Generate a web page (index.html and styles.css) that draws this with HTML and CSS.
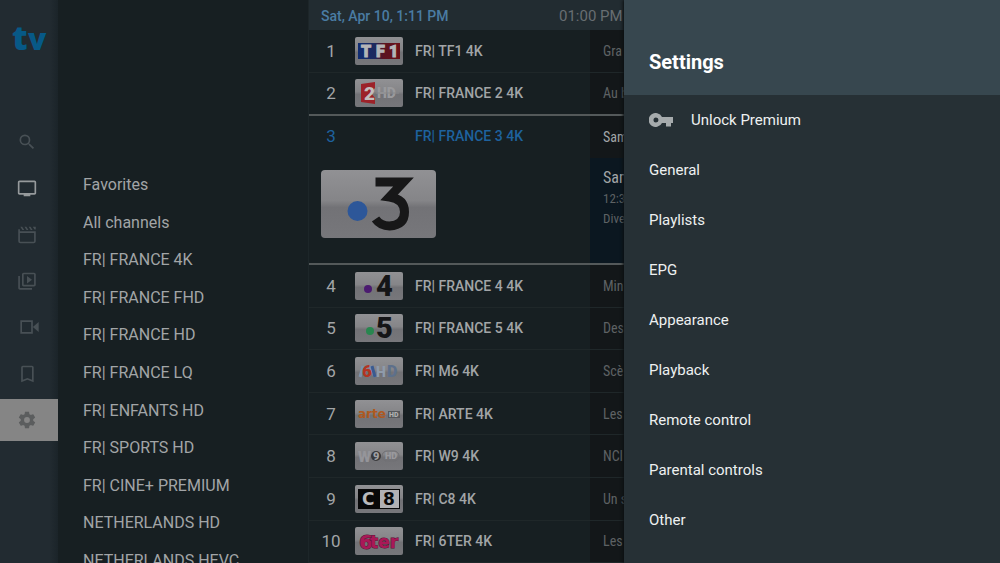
FILE: index.html
```
<!DOCTYPE html>
<html lang="en">
<head>
    <meta charset="UTF-8">
    <meta name="viewport" content="width=device-width, initial-scale=1.0">
    <title>TV - Settings</title>
    <link rel="stylesheet" href="styles.css">
</head>
<body>
    <nav class="sidebar" aria-label="Main">
        <svg class="brand" viewBox="0 0 36 32" role="img" aria-label="tv">
            <text class="brand-t" x="0" y="27">t</text>
            <text class="brand-v" x="16" y="27">v</text>
        </svg>
        <div class="menu">
            <button type="button" aria-label="Search"><svg viewBox="0 0 24 24"><path d="M15.5 14h-.79l-.28-.27A6.47 6.47 0 0 0 16 9.5 6.5 6.5 0 1 0 9.5 16c1.61 0 3.09-.59 4.23-1.57l.27.28v.79l5 4.99L20.49 19l-4.99-5zm-6 0a4.5 4.5 0 1 1 0-9 4.5 4.5 0 0 1 0 9z"/></svg></button>
            <button type="button" aria-label="TV" class="current"><svg viewBox="0 0 24 24"><path d="M21 3H3c-1.1 0-2 .9-2 2v13c0 1.1.9 2 2 2h5v2h8v-2h5c1.1 0 2-.9 2-2V5c0-1.1-.9-2-2-2zm0 15H3V5h18v13z"/></svg></button>
            <button type="button" aria-label="Movies"><svg viewBox="0 0 24 24"><path d="M2.500 8.500h19v11a1.500 1.500 0 0 1-1.500 1.500H4a1.500 1.500 0 0 1-1.500-1.500V5" fill="none" stroke="currentColor" stroke-width="2"/><path d="M4 2l2.500 4h2.200L6.200 2zM9 2l2.500 4h2.200L11.200 2zM14 2l2.500 4h2.200L16.200 2zM19 2l2 3.500h1.500V2z"/></svg></button>
            <button type="button" aria-label="Shows"><svg viewBox="0 0 24 24"><path d="M3.500 6H1.500v14.500c0 1.100.9 2 2 2H18v-2H3.500V6zM20.500 2H8c-1.100 0-2 .9-2 2v12.500c0 1.100.9 2 2 2h12.500c1.100 0 2-.9 2-2V4c0-1.100-.9-2-2-2zm0 14.500H8V4h12.500v12.500zM12 6v9l6-4.500z"/></svg></button>
            <button type="button" aria-label="Recordings"><svg viewBox="0 0 24 24"><path d="M4 4h15v16H4V4zm2 2v12h11V6H6z"/><path d="M19 12l7-6v12z"/></svg></button>
            <button type="button" aria-label="My list"><svg viewBox="0 0 24 24"><path d="M18 2H7c-1.100 0-2 .9-2 2v18l7.500-3 7.500 3V4c0-1.100-.9-2-2-2zm0 17l-5.500-2.200L7 19V4h11v15z"/></svg></button>
            <button type="button" aria-label="Settings" class="focused"><svg viewBox="0 0 24 24"><path d="M19.430 12.980c.04-.32.07-.64.07-.98s-.03-.66-.07-.98l2.110-1.650c.19-.15.24-.42.12-.64l-2-3.460c-.12-.22-.39-.3-.61-.22l-2.490 1c-.52-.4-1.080-.73-1.690-.98l-.38-2.650C14.460 2.180 14.250 2 14 2h-4c-.25 0-.46.18-.49.42l-.38 2.650c-.61.25-1.170.59-1.690.98l-2.490-1c-.23-.09-.49 0-.61.22l-2 3.460c-.13.22-.07.49.12.64l2.110 1.650c-.04.32-.07.65-.07.98s.03.66.07.98l-2.110 1.650c-.19.15-.24.42-.12.64l2 3.460c.12.22.39.3.61.22l2.490-1c.52.4 1.080.73 1.690.98l.38 2.650c.03.24.24.42.49.42h4c.25 0 .46-.18.49-.42l.38-2.650c.61-.25 1.170-.59 1.690-.98l2.490 1c.23.09.49 0 .61-.22l2-3.460c.12-.22.07-.49-.12-.64l-2.110-1.650zM12 15.500a3.500 3.500 0 1 1 0-7 3.500 3.500 0 0 1 0 7z"/></svg></button>
        </div>
    </nav>

    <nav class="groups" aria-label="Channel groups">
        <ul>
            <li><a href="#">Favorites</a></li>
            <li><a href="#">All channels</a></li>
            <li><a href="#">FR| FRANCE 4K</a></li>
            <li><a href="#">FR| FRANCE FHD</a></li>
            <li><a href="#">FR| FRANCE HD</a></li>
            <li><a href="#">FR| FRANCE LQ</a></li>
            <li><a href="#">FR| ENFANTS HD</a></li>
            <li><a href="#">FR| SPORTS HD</a></li>
            <li><a href="#">FR| CINE+ PREMIUM</a></li>
            <li><a href="#">NETHERLANDS HD</a></li>
            <li><a href="#">NETHERLANDS HEVC</a></li>
        </ul>
    </nav>

    <main class="guide">
        <header class="guide-header">
            <span class="now">Sat, Apr 10, 1:11 PM</span>
            <span class="slot">01:00 PM</span>
        </header>

        <div class="row">
            <div class="channel">
                <span class="number">1</span>
                <svg class="logo" viewBox="0 0 48 28">
                    <defs>
                        <linearGradient id="tf1"><stop offset="0" stop-color="#0f2c72"/><stop offset=".4" stop-color="#1d2a5e"/><stop offset=".6" stop-color="#5a1420"/><stop offset="1" stop-color="#6a1018"/></linearGradient>
                    </defs>
                    <rect x="3" y="6" width="42" height="16" fill="url(#tf1)"/>
                    <g class="heavy" font-size="16" fill="#b4b4b7" stroke="#b4b4b7"><text x="6" y="20">T</text><text x="21" y="20">F</text><text x="34" y="20">1</text></g>
                </svg>
                <span class="name">FR| TF1 4K</span>
            </div>
            <div class="programme">Gra</div>
        </div>
        <div class="row">
            <div class="channel">
                <span class="number">2</span>
                <svg class="logo" viewBox="0 0 48 28">
                    <path d="M6 5l14-2v6l-4 5 4 5v6L6 23z" fill="#9c2229"/>
                    <text class="heavy" x="9" y="21" font-size="19" fill="#c2bdbd">2</text>
                    <text class="heavy" x="22" y="19" font-size="14" fill="#9a9a9d">HD</text>
                    <path d="M21 14h23" stroke="#88888b"/>
                </svg>
                <span class="name">FR| FRANCE 2 4K</span>
            </div>
            <div class="programme">Au b</div>
        </div>

        <section class="row expanded">
            <div class="channel">
                <span class="number">3</span>
                <span class="name">FR| FRANCE 3 4K</span>
                <svg class="logo" viewBox="0 0 114 68">
                    <circle cx="36" cy="41" r="10" fill="#2d5799"/>
                    <path d="M54 12H82L68 27Q83 29 83 42Q83 55 68 56Q59 56 54 49" class="three"/>
                </svg>
            </div>
            <div class="programme">
                <p class="current-show">Sam</p>
                <div class="details">
                    <h2>Sam</h2>
                    <p>12:3</p>
                    <p>Dive</p>
                </div>
            </div>
        </section>

        <div class="row">
            <div class="channel">
                <span class="number">4</span>
                <svg class="logo" viewBox="0 0 48 28">
                    <circle cx="13" cy="17" r="4" fill="#4b1a70"/>
                    <text class="heavy" x="21" y="24" font-size="29" fill="#151517">4</text>
                </svg>
                <span class="name">FR| FRANCE 4 4K</span>
            </div>
            <div class="programme">Min</div>
        </div>
        <div class="row">
            <div class="channel">
                <span class="number">5</span>
                <svg class="logo" viewBox="0 0 48 28">
                    <circle cx="15" cy="17" r="4" fill="#28864f"/>
                    <text class="heavy" x="21" y="24" font-size="29" fill="#151517">5</text>
                </svg>
                <span class="name">FR| FRANCE 5 4K</span>
            </div>
            <div class="programme">Des</div>
        </div>
        <div class="row">
            <div class="channel">
                <span class="number">6</span>
                <svg class="logo" viewBox="0 0 48 28">
                    <path d="M5 20l3-11M15 9l5 11" stroke="#7d92ad" stroke-width="3"/>
                    <path d="M17 9l3 11" stroke="#3a5a90" stroke-width="3"/>
                    <text class="heavy" x="7" y="20" font-size="17" fill="#b33422">6</text>
                    <text class="heavy" x="21" y="20" font-size="14" fill="#8f9bab">H</text>
                    <text class="heavy" x="32" y="20" font-size="16" fill="#5d708b">D</text>
                </svg>
                <span class="name">FR| M6 4K</span>
            </div>
            <div class="programme">Scè</div>
        </div>
        <div class="row">
            <div class="channel">
                <span class="number">7</span>
                <svg class="logo" viewBox="0 0 48 28">
                    <text class="wide" x="3" y="18" font-size="12" fill="#ae5920">arte</text>
                    <rect x="33" y="11" width="12" height="7" fill="#55575b"/>
                    <text class="heavy" x="34" y="17" font-size="7" fill="#b0b0b2">HD</text>
                </svg>
                <span class="name">FR| ARTE 4K</span>
            </div>
            <div class="programme">Les</div>
        </div>
        <div class="row">
            <div class="channel">
                <span class="number">8</span>
                <svg class="logo" viewBox="0 0 48 28">
                    <text class="heavy" x="3" y="20" font-size="15" fill="#95959a">W</text>
                    <circle cx="21" cy="14" r="5" fill="#38383b"/>
                    <text class="heavy" x="18" y="18" font-size="11" fill="#a0a0a3">9</text>
                    <rect x="27" y="9" width="17" height="10" rx="5" fill="none" stroke="#707074"/>
                    <text class="heavy" x="30" y="17" font-size="9" fill="#9a9a9e">HD</text>
                </svg>
                <span class="name">FR| W9 4K</span>
            </div>
            <div class="programme">NCI</div>
        </div>
        <div class="row">
            <div class="channel">
                <span class="number">9</span>
                <svg class="logo" viewBox="0 0 48 28">
                    <rect x="3" y="4" width="42" height="20" fill="#080809"/>
                    <rect x="25" y="5" width="19" height="18" fill="#b1b1b4"/>
                    <text class="wide" x="7" y="20" font-size="17" fill="#b9b9bc">C</text>
                    <text class="wide" x="28" y="20" font-size="17" fill="#080809">8</text>
                </svg>
                <span class="name">FR| C8 4K</span>
            </div>
            <div class="programme">Un s</div>
        </div>
        <div class="row">
            <div class="channel">
                <span class="number">10</span>
                <svg class="logo" viewBox="0 0 48 28">
                    <g class="ter"><text x="4" y="22" font-size="20">6</text><text x="15" y="21" font-size="17">ter</text></g>
                </svg>
                <span class="name">FR| 6TER 4K</span>
            </div>
            <div class="programme">Les</div>
        </div>
    </main>

    <aside class="settings">
        <h1>Settings</h1>
        <ul>
            <li><a href="#"><svg class="key" viewBox="0 0 24 14"><path d="M13 4A7 7 0 1 0 13 10H17V13.500H22V10H24V4zM7 9.500a2.500 2.500 0 1 1 0-5 2.500 2.500 0 0 1 0 5z"/></svg>Unlock Premium</a></li>
            <li><a href="#">General</a></li>
            <li><a href="#">Playlists</a></li>
            <li><a href="#">EPG</a></li>
            <li><a href="#">Appearance</a></li>
            <li><a href="#">Playback</a></li>
            <li><a href="#">Remote control</a></li>
            <li><a href="#">Parental controls</a></li>
            <li><a href="#">Other</a></li>
        </ul>
    </aside>
</body>
</html>
```
FILE: styles.css
```
* {
    box-sizing: border-box;
}

body {
    display: flex;
    height: 100vh;
    margin: 0;
    overflow: hidden;
    background-color: #171f22;
    color: #a2a5a7;
    font-family: Roboto, sans-serif;
    font-size: 14px;
}

ul {
    list-style: none;
    margin: 0;
    padding: 0;
}

h1, h2, p {
    margin: 0;
}

a {
    color: inherit;
    text-decoration: none;
}

/* icon bar */
.sidebar {
    display: flex;
    flex-direction: column;
    flex: none;
    width: 58px;
    padding: 23px 0 120px;
    background: linear-gradient(to right, #222b31 85%, #1b2429);
}

.brand {
    width: 36px;
    height: 32px;
    margin: 0 0 64px 12px;
    overflow: visible;
    fill: #075987;
    font-family: "Open Sans", sans-serif;
    font-weight: 800;
}

.brand-t {
    font-size: 34px;
}

.brand-v {
    font-size: 30px;
}

.menu {
    display: flex;
    flex-direction: column;
    flex: 1;
}

.menu button {
    display: flex;
    flex: 1;
    align-items: center;
    width: 100%;
    margin: 2px 0;
    padding: 0 0 0 17px;
    border: none;
    background: none;
    color: #485055;
}

.menu svg {
    width: 20px;
    height: 20px;
    overflow: visible;
    fill: currentColor;
}

.menu .current {
    color: #969a9c;
}

.menu .focused {
    background-color: #858585;
    color: #5b5d5e;
}

/* channel groups */
.groups {
    display: flex;
    flex: none;
    width: 250px;
    padding: 166px 0 0 25px;
    font-size: 16px;
}

.groups ul {
    display: flex;
    flex-direction: column;
    flex: 1;
    margin-bottom: -16px;
}

.groups li {
    display: flex;
    flex: 1;
    align-items: center;
}

/* programme guide */
.guide {
    display: flex;
    flex-direction: column;
    flex: 1;
    min-width: 0;
    overflow: hidden;
    border-left: 1px solid #1d2629;
    white-space: nowrap;
}

.guide-header {
    display: flex;
    flex: none;
    align-items: center;
    height: 30px;
    padding: 1px 0 0 12px;
    background-color: #222c31;
}

.now {
    width: 238px;
    color: #4a7ca3;
    font-weight: 500;
}

.slot {
    color: #686e72;
    font-size: 15px;
}

.row {
    display: flex;
    flex: 1;
    border-bottom: 1px solid #1f2729;
}

.channel {
    display: flex;
    flex: none;
    align-items: center;
    width: 281px;
}

.number {
    width: 46px;
    padding-right: 2px;
    font-size: 17px;
    text-align: center;
}

.logo {
    width: 48px;
    height: 28px;
    border-radius: 2px;
    background: linear-gradient(#919194, #858588 45%, #727276 55%, #77777b);
}

.name {
    margin-left: 12px;
    font-weight: 500;
}

.programme {
    display: flex;
    flex: 1;
    align-items: center;
    min-width: 0;
    padding-left: 13px;
    background-color: #131719;
    color: #5e6264;
    font-family: "Roboto Condensed", "Liberation Sans Narrow", Roboto, sans-serif;
}

.expanded {
    flex: none;
    height: 151px;
    margin-top: -1px;
    border-top: 2px solid #54595a;
    border-bottom: 2px solid #54595a;
}

.expanded .channel {
    flex-wrap: wrap;
    align-content: flex-start;
    padding-top: 10px;
    color: #1e629e;
}

.expanded .name {
    margin-left: 60px;
}

.expanded .logo {
    width: 115px;
    height: 68px;
    margin: 24px 0 0 12px;
    border-radius: 4px;
}

.expanded .programme {
    flex-direction: column;
    align-items: stretch;
    padding-left: 0;
}

.current-show {
    padding-left: 13px;
    color: #a2a5a7;
    line-height: 42px;
}

.details {
    flex: 1;
    padding: 9px 0 0 13px;
    background-color: #0b1720;
    font-size: 13px;
    line-height: 20px;
}

.details h2 {
    color: #a2a5a7;
    font-size: 16px;
    font-weight: 400;
    line-height: 22px;
}

/* channel logos */
.heavy {
    font-family: Roboto, sans-serif;
    font-weight: 900;
}

.wide {
    font-family: "DejaVu Sans", sans-serif;
    font-weight: 700;
}

.three {
    fill: none;
    stroke: #171718;
    stroke-width: 9;
}

.ter {
    fill: #a91857;
    stroke: #591336;
    stroke-width: 1;
    paint-order: stroke;
    font-family: "DejaVu Sans", sans-serif;
    font-weight: 700;
}

/* settings panel */
.settings {
    z-index: 1;
    flex: none;
    width: 376px;
    background-color: #263035;
    box-shadow: -1px 0 3px #0b0f11;
    color: #eef0f1;
    font-size: 15px;
}

.settings h1 {
    height: 95px;
    padding: 50px 25px 0;
    background-color: #37474f;
    color: #ffffff;
    font-size: 20px;
    line-height: 24px;
}

.settings a {
    display: flex;
    align-items: center;
    height: 50px;
    padding: 0 25px;
}

.key {
    width: 24px;
    height: 14px;
    margin-right: 18px;
    fill: #a6abad;
}
```
